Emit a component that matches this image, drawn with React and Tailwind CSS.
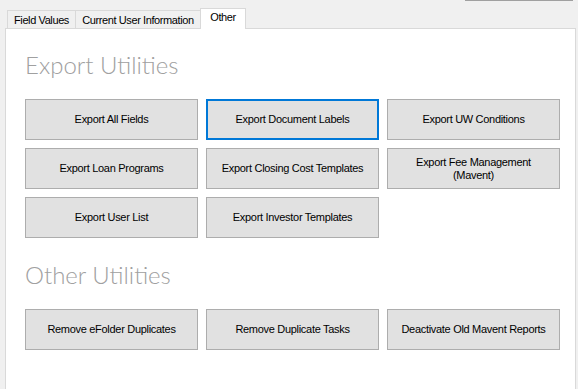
export default function App() {
  const exportButtons = [
    { label: "Export All Fields" },
    { label: "Export Document Labels", focused: true },
    { label: "Export UW Conditions" },
    { label: "Export Loan Programs" },
    { label: "Export Closing Cost Templates" },
    { label: "Export Fee Management\n(Mavent)" },
    { label: "Export User List" },
    { label: "Export Investor Templates" },
  ];
  const otherButtons = [
    { label: "Remove eFolder Duplicates" },
    { label: "Remove Duplicate Tasks" },
    { label: "Deactivate Old Mavent Reports" },
  ];

  const Btn = ({ label, focused }) => (
    <div
      className={
        "h-[41px] bg-[#e1e1e1] flex items-center justify-center text-center whitespace-pre-line text-[11px] leading-[13px] tracking-[-0.3px] text-black " +
        (focused ? "border-2 border-[#0078d7]" : "border border-[#adadad]")
      }
    >
      {label}
    </div>
  );

  return (
    <div className="w-[578px] h-[389px] bg-[#f0f0f0] overflow-hidden flex flex-col font-['Liberation_Sans',Arial,sans-serif]">
      <div className="h-px ml-[465px] w-[108px] bg-[#a0a0a0] shrink-0" />
      <div className="h-[27px] shrink-0 flex items-end pl-[7px] text-[11px] leading-[13px] tracking-[-0.4px] text-black">
        <div className="w-[69px] h-[18px] border border-b-0 border-[#d9d9d9] bg-[#f0f0f0] text-center pt-[3px]">
          Field Values
        </div>
        <div className="w-[125px] h-[18px] border border-l-0 border-b-0 border-[#d9d9d9] bg-[#f0f0f0] text-center pt-[3px]">
          Current User Information
        </div>
        <div className="relative z-10 -ml-px -mb-px w-[46px] h-[21px] border border-b-0 border-[#d9d9d9] bg-white text-center pt-[2px]">
          Other
        </div>
      </div>
      <div className="ml-[5px] w-[571px] h-[400px] shrink-0 bg-white border border-[#d9d9d9] pl-[19px] pt-[22px]">
        <div className="font-['Lato',sans-serif] font-light text-[24px] leading-[28px] text-[#a0a0a0]">
          Export Utilities
        </div>
        <div className="mt-[20px] grid grid-cols-[173px_173px_173px] auto-rows-[41px] gap-x-[8px] gap-y-[8px]">
          {exportButtons.map((b) => (
            <Btn key={b.label} {...b} />
          ))}
        </div>
        <div className="mt-[23px] font-['Lato',sans-serif] font-light text-[24px] leading-[28px] text-[#a0a0a0]">
          Other Utilities
        </div>
        <div className="mt-[20px] grid grid-cols-[173px_173px_173px] auto-rows-[41px] gap-x-[8px] gap-y-[8px]">
          {otherButtons.map((b) => (
            <Btn key={b.label} {...b} />
          ))}
        </div>
      </div>
    </div>
  );
}
